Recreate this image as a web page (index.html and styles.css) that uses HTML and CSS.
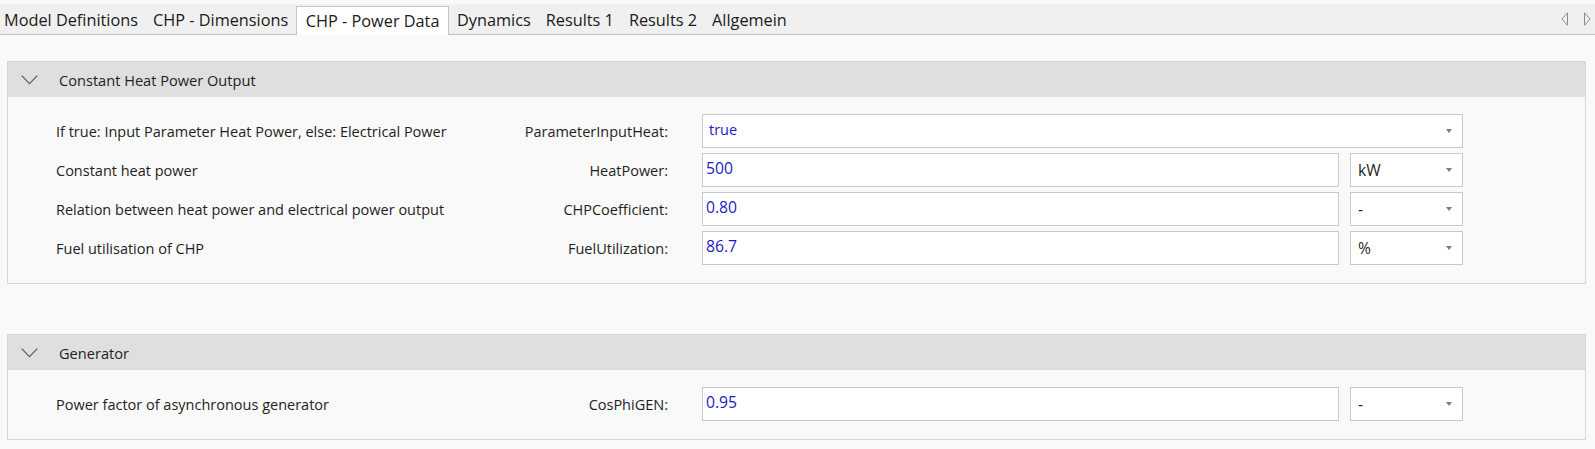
FILE: index.html
```html
<!DOCTYPE html>
<html>
<head>
<meta charset="utf-8">
<link rel="stylesheet" href="styles.css">
</head>
<body>
<div class="tabbar">
  <div class="tabs">
    <span class="tab first">Model Definitions</span>
    <span class="tab">CHP - Dimensions</span>
    <span class="tab active">CHP - Power Data</span>
    <span class="tab">Dynamics</span>
    <span class="tab">Results 1</span>
    <span class="tab">Results 2</span>
    <span class="tab">Allgemein</span>
  </div>
  <div class="nav">
    <svg class="nav-arrow" width="8" height="14" viewBox="0 0 8 14"><polygon points="6.5,0.8 1,7 6.5,13.2" fill="none" stroke="#8a8a8a" stroke-width="1"/></svg>
    <svg class="nav-arrow" width="8" height="14" viewBox="0 0 8 14"><polygon points="1.5,0.8 7,7 1.5,13.2" fill="none" stroke="#8a8a8a" stroke-width="1"/></svg>
  </div>
</div>

<div class="content">
  <section class="group">
    <div class="group-head">
      <svg class="chev" width="17" height="10" viewBox="0 0 17 10"><polyline points="0.7,0.7 8.5,8.7 16.3,0.7" fill="none" stroke="#5a5a5a" stroke-width="1.2"/></svg>
      <span class="group-title">Constant Heat Power Output</span>
    </div>
    <div class="group-body">
      <span class="desc">If true: Input Parameter Heat Power, else: Electrical Power</span>
      <span class="name">ParameterInputHeat:</span>
      <div class="field combo wide"><span class="val bool">true</span><span class="arrow"></span></div>

      <span class="desc">Constant heat power</span>
      <span class="name">HeatPower:</span>
      <div class="field"><span class="val">500</span></div>
      <div class="field combo unit"><span class="unit-text">kW</span><span class="arrow"></span></div>

      <span class="desc">Relation between heat power and electrical power output</span>
      <span class="name">CHPCoefficient:</span>
      <div class="field"><span class="val">0.80</span></div>
      <div class="field combo unit"><span class="unit-text">-</span><span class="arrow"></span></div>

      <span class="desc">Fuel utilisation of CHP</span>
      <span class="name">FuelUtilization:</span>
      <div class="field"><span class="val">86.7</span></div>
      <div class="field combo unit"><span class="unit-text">%</span><span class="arrow"></span></div>
    </div>
  </section>

  <section class="group">
    <div class="group-head">
      <svg class="chev" width="17" height="10" viewBox="0 0 17 10"><polyline points="0.7,0.7 8.5,8.7 16.3,0.7" fill="none" stroke="#5a5a5a" stroke-width="1.2"/></svg>
      <span class="group-title">Generator</span>
    </div>
    <div class="group-body">
      <span class="desc">Power factor of asynchronous generator</span>
      <span class="name">CosPhiGEN:</span>
      <div class="field"><span class="val">0.95</span></div>
      <div class="field combo unit"><span class="unit-text">-</span><span class="arrow"></span></div>
    </div>
  </section>
</div>
</body>
</html>
```

FILE: styles.css
```css
html, body {
  margin: 0;
  padding: 0;
  background: #f9f9f9;
  font-family: "Open Sans", "Noto Sans", sans-serif;
  color: #1e1e1e;
}

.tabbar {
  margin-top: 4px;
  height: 30px;
  background: #f0f0f0;
  border-bottom: 1px solid #bdbdbd;
  display: flex;
  justify-content: space-between;
  align-items: stretch;
}

.tabs {
  display: flex;
  align-items: stretch;
}

.tab {
  display: flex;
  align-items: center;
  padding: 1px 7.5px 0 7.5px;
  font-size: 16.3px;
  color: #1a1a1a;
  white-space: nowrap;
}

.tab.first {
  padding-left: 4px;
}

.tab.active {
  background: #ffffff;
  border: 1px solid #c4c4c4;
  border-bottom: none;
  margin-top: 2px;
  margin-bottom: -1px;
  padding: 0 9px 0 9px;
}

.nav {
  display: flex;
  align-items: center;
  gap: 14px;
  padding-right: 4px;
  padding-bottom: 1px;
}

.nav-arrow {
  display: block;
}

.content {
  padding: 26px 9px 0 7px;
  display: flex;
  flex-direction: column;
  gap: 50px;
}

.group {
  border: 1px solid #d6d6d6;
  background: #f9f9f9;
}

.group-head {
  height: 35px;
  background: #dfdfdf;
  display: flex;
  align-items: center;
}

.chev {
  display: block;
  margin-left: 13px;
  margin-right: 21px;
  margin-top: 1px;
}

.group-title {
  font-size: 14.6px;
  color: #1e1e1e;
  padding-top: 1px;
}

.group-body {
  display: grid;
  grid-template-columns: 439px 185px 637px 113px;
  grid-auto-rows: 34px;
  column-gap: 11px;
  row-gap: 5px;
  padding: 17px 0 18px 48px;
  align-items: center;
}

.desc {
  font-size: 14.5px;
  white-space: nowrap;
}

.name {
  font-size: 14.5px;
  text-align: right;
  padding-right: 23px;
  white-space: nowrap;
}

.field {
  height: 34px;
  box-sizing: border-box;
  background: #ffffff;
  border: 1px solid #c9c9c9;
  display: flex;
  align-items: center;
  justify-content: space-between;
  padding: 0 10px 4px 3px;
}

.field.wide {
  grid-column: 3 / 5;
  padding-left: 6px;
}

.val {
  font-size: 15.7px;
  color: #1b1bc2;
}

.val.bool {
  font-size: 14.5px;
}

.unit-text {
  font-size: 15.6px;
  color: #1e1e1e;
  padding-left: 4px;
  padding-top: 4px;
}

.arrow {
  width: 0;
  height: 0;
  border-left: 3.5px solid transparent;
  border-right: 3.5px solid transparent;
  border-top: 4px solid #7c7c7c;
  margin-top: 4px;
}
```
